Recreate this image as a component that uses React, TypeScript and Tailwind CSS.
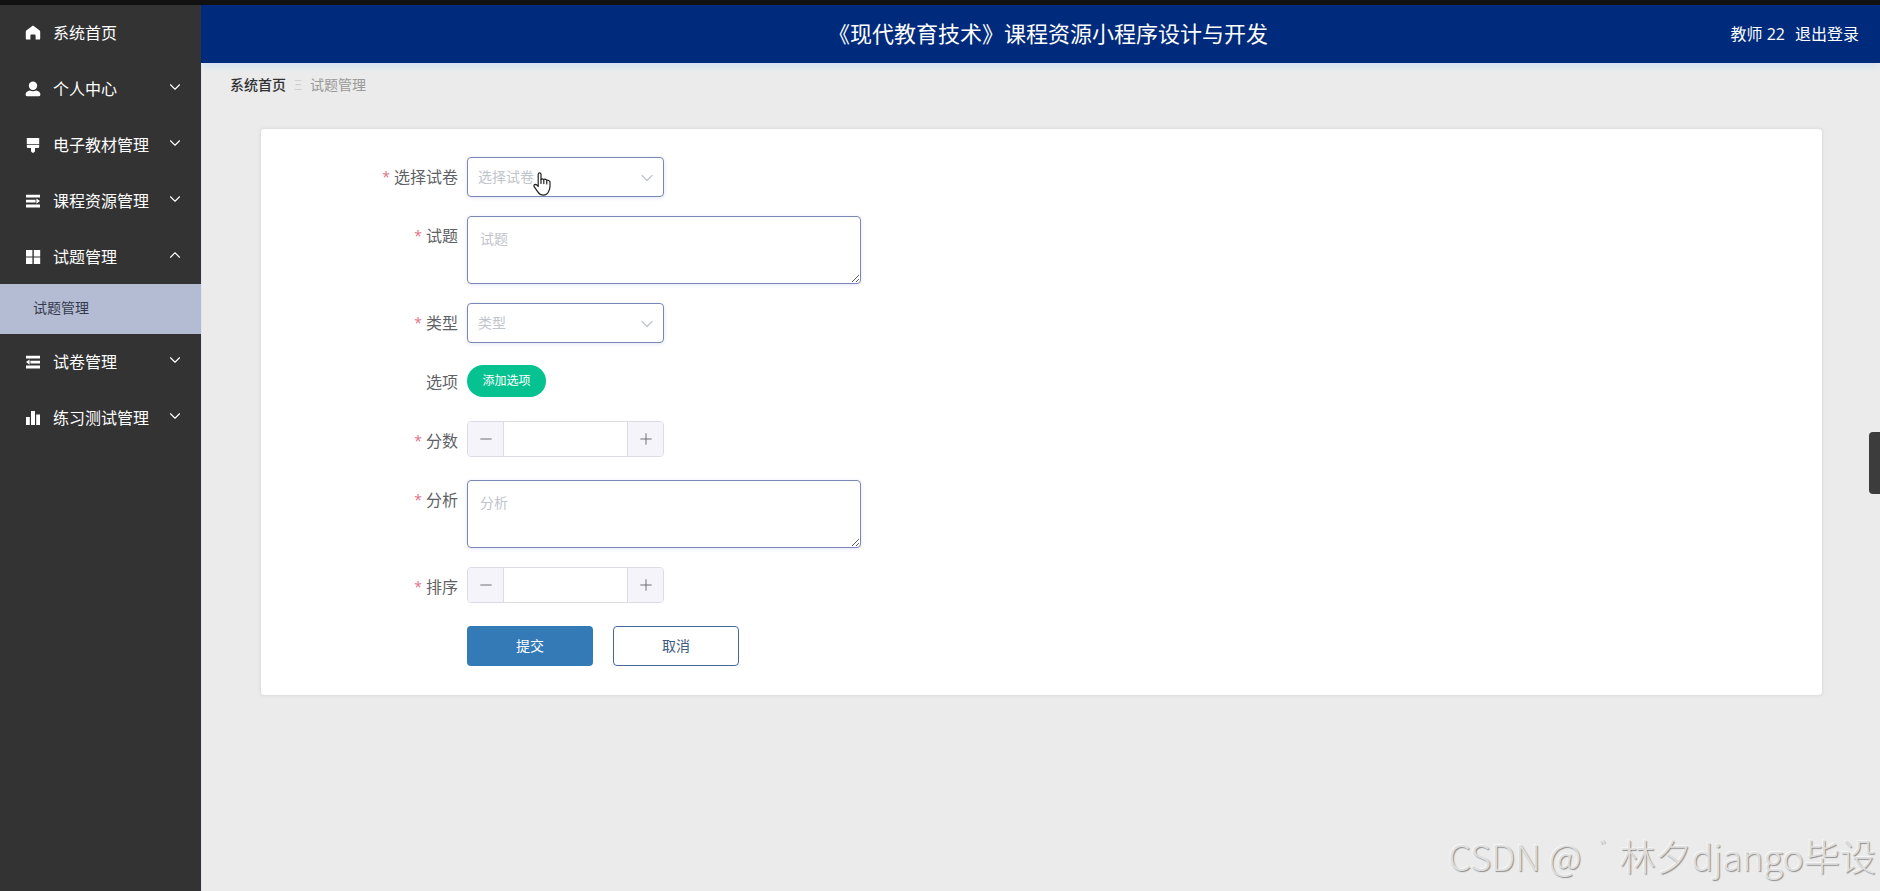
import { ReactNode, useState } from 'react';
import { FiChevronDown, FiChevronUp, FiMinus, FiPlus } from 'react-icons/fi';

interface MenuItem {
  label: string;
  icon: ReactNode;
  children?: string[];
}

const HomeIcon = (
  <svg viewBox="0 0 16 16" className="w-4 h-4 fill-current">
    <path d="M8 0.6 1.6 5.2Q0.8 5.8 0.8 6.8V13.4Q0.8 14.6 2 14.6H5.4V10.6Q5.4 9.6 6.4 9.6H9.6Q10.6 9.6 10.6 10.6V14.6H14Q15.2 14.6 15.2 13.4V6.8Q15.2 5.8 14.4 5.2Z" />
  </svg>
);

const UserIcon = (
  <svg viewBox="0 0 16 16" className="w-4 h-4 fill-current">
    <circle cx="8" cy="4.7" r="4.2" />
    <path d="M4.6 9.4Q8 11 11.4 9.4Q15.4 10.4 15.4 13.6Q15.4 15.2 14 15.2H2Q0.6 15.2 0.6 13.6Q0.6 10.4 4.6 9.4Z" />
  </svg>
);

const BrushIcon = (
  <svg viewBox="0 0 16 16" className="w-4 h-4 fill-current">
    <path d="M2.4 1H13.6Q14.2 1 14.2 1.6V7.2H1.8V1.6Q1.8 1 2.4 1Z" />
    <path d="M1.8 8H14.2V9.8Q14.2 11 13 11H10V14.4L8.6 15.8H7.4L6 14.4V11H3Q1.8 11 1.8 9.8Z" />
  </svg>
);

const UnfoldIcon = (
  <svg viewBox="0 0 16 16" className="w-4 h-4 fill-current">
    <path d="M1 1.8H15V4.6H1ZM1 6.8H10.6V9.4H1ZM1 11.6H15V14.4H1ZM11.4 5.4 15 8.1 11.4 10.8Z" />
  </svg>
);

const GridIcon = (
  <svg viewBox="0 0 16 16" className="w-4 h-4 fill-current">
    <path d="M1 1H7.4V7.4H1ZM8.8 1H15.2V7.4H8.8ZM1 8.6H7.4V15H1ZM8.8 8.6H15.2V15H8.8Z" />
  </svg>
);

const FoldIcon = (
  <svg viewBox="0 0 16 16" className="w-4 h-4 fill-current">
    <path d="M1 1.8H15V4.6H1ZM5.4 6.8H15V9.4H5.4ZM1 11.6H15V14.4H1ZM4.6 5.4 1 8.1 4.6 10.8Z" />
  </svg>
);

const ChartIcon = (
  <svg viewBox="0 0 16 16" className="w-4 h-4 fill-current">
    <path d="M1 7H4.8V15H1ZM6 1H10V15H6ZM11.2 4.6H15V15H11.2Z" />
  </svg>
);

const menu: MenuItem[] = [
  { label: '系统首页', icon: HomeIcon },
  { label: '个人中心', icon: UserIcon, children: [] },
  { label: '电子教材管理', icon: BrushIcon, children: [] },
  { label: '课程资源管理', icon: UnfoldIcon, children: [] },
  { label: '试题管理', icon: GridIcon, children: ['试题管理'] },
  { label: '试卷管理', icon: FoldIcon, children: [] },
  { label: '练习测试管理', icon: ChartIcon, children: [] },
];

function Sidebar() {
  const [open, setOpen] = useState('试题管理');

  return (
    <nav className="z-10 w-[201px] shrink-0 bg-[#333333] text-white">
      {menu.map((item) => (
        <div key={item.label}>
          <button
            type="button"
            className="flex h-14 w-full items-center pl-[25px] pr-[17px] text-base"
            onClick={() => item.children && setOpen(open === item.label ? '' : item.label)}
          >
            {item.icon}
            <span className="ml-3 flex-1 text-left">{item.label}</span>
            {item.children &&
              (open === item.label ? (
                <FiChevronUp className="mb-1 h-[18px] w-[18px]" strokeWidth={1.5} />
              ) : (
                <FiChevronDown className="mb-1 h-[18px] w-[18px]" strokeWidth={1.5} />
              ))}
          </button>
          {open === item.label &&
            item.children?.map((child) => (
              <a
                key={child}
                href="#"
                className="-mt-px flex h-[50px] items-center bg-[#b4bcd4] pb-0.5 pl-[33px] text-sm text-[#333a4c]"
              >
                {child}
              </a>
            ))}
        </div>
      ))}
    </nav>
  );
}

interface FieldProps {
  label: string;
  id: string;
  required?: boolean;
  children: ReactNode;
}

function Field({ label, id, required = false, children }: FieldProps) {
  return (
    <div className="mb-[19px] flex items-start">
      <label
        htmlFor={id}
        className="flex h-10 w-[169px] shrink-0 items-center justify-end pr-[9px] text-base text-[#606266]"
      >
        {required && <span className="mr-1 text-sm text-[#e0708a]">*</span>}
        {label}
      </label>
      {children}
    </div>
  );
}

function SelectBox({ id, placeholder }: { id: string; placeholder: string }) {
  return (
    <div className="relative h-10 w-[197px]">
      <select
        id={id}
        defaultValue=""
        className="h-full w-full cursor-pointer appearance-none rounded border border-[#7b86b6] bg-white px-2.5 text-sm text-[#c0c4cc] shadow-[0_1px_4px_#e4e7f6]"
      >
        <option value="" disabled>
          {placeholder}
        </option>
      </select>
      <FiChevronDown
        className="pointer-events-none absolute right-[7px] top-[11px] h-5 w-5 text-[#c0c4cc]"
        strokeWidth={1.5}
      />
    </div>
  );
}

function TextArea({ id, placeholder }: { id: string; placeholder: string }) {
  return (
    <textarea
      id={id}
      placeholder={placeholder}
      className="block h-[68px] w-[394px] resize rounded border border-[#7b86b6] bg-white px-3 py-3 text-sm leading-5 text-[#606266] shadow-[0_1px_4px_#e4e7f6] placeholder:text-[#c0c4cc]"
    />
  );
}

function NumberBox({ id }: { id: string }) {
  const [value, setValue] = useState('');
  const step = (by: number) => setValue(String((Number(value) || 0) + by));

  return (
    <div className="flex h-9 w-[197px] overflow-hidden rounded border border-[#dcdce6] bg-white">
      <button
        type="button"
        aria-label="减少"
        onClick={() => step(-1)}
        className="flex w-9 items-center justify-center border-r border-[#dcdce6] bg-[#f5f4fa] text-[#606266]"
      >
        <FiMinus className="h-[18px] w-[18px]" strokeWidth={1.2} />
      </button>
      <input
        id={id}
        type="text"
        value={value}
        onChange={(e) => setValue(e.target.value)}
        className="min-w-0 flex-1 text-center text-sm text-[#606266]"
      />
      <button
        type="button"
        aria-label="增加"
        onClick={() => step(1)}
        className="flex w-9 items-center justify-center border-l border-[#dcdce6] bg-[#f5f4fa] text-[#606266]"
      >
        <FiPlus className="h-[18px] w-[18px]" strokeWidth={1.2} />
      </button>
    </div>
  );
}

function HandPointer() {
  return (
    <svg
      viewBox="0 0 18 24"
      className="pointer-events-none absolute left-[66px] top-[15px] h-6 w-[18px]"
      fill="#ffffff"
      stroke="#222222"
      strokeWidth="1.2"
      strokeLinejoin="round"
      strokeLinecap="round"
    >
      <path d="M5.2 14.5V2.5Q5.2 0.9 6.6 0.9Q8 0.9 8 2.5V7.6Q9 6.2 10.6 7.6Q12 6.6 13.6 8.2Q15.4 7.8 17 9.6V14.2Q16.9 17 15.6 19.6Q14 23.2 10.2 23.2Q7 23.2 5 20.2L1 14.4Q0.6 12.6 2.2 12.4Q3.8 12.4 5.2 14.5Z" />
      <path d="M8 7.6V11.4M10.8 7.8V11.6M13.8 8.6V12" fill="none" />
    </svg>
  );
}

function QuestionForm() {
  return (
    <form
      className="rounded border border-[#e0e0e3] bg-white pb-2.5 pl-[37px] pt-7 shadow-[0_0_3px_#dddddf]"
      onSubmit={(e) => e.preventDefault()}
    >
      <Field label="选择试卷" id="paper" required>
        <div className="relative">
          <SelectBox id="paper" placeholder="选择试卷" />
          <HandPointer />
        </div>
      </Field>
      <Field label="试题" id="question" required>
        <TextArea id="question" placeholder="试题" />
      </Field>
      <Field label="类型" id="type" required>
        <SelectBox id="type" placeholder="类型" />
      </Field>
      <Field label="选项" id="options">
        <div className="flex h-[38px] items-center">
          <button id="options" type="button" className="h-8 w-[79px] rounded-full bg-[#06c291] text-xs text-white">
            添加选项
          </button>
        </div>
      </Field>
      <Field label="分数" id="score" required>
        <NumberBox id="score" />
      </Field>
      <Field label="分析" id="analysis" required>
        <TextArea id="analysis" placeholder="分析" />
      </Field>
      <Field label="排序" id="order" required>
        <NumberBox id="order" />
      </Field>
      <div className="mb-[19px] flex gap-5 pl-[169px]">
        <button type="submit" className="h-10 w-[126px] rounded bg-[#337ab7] text-sm text-white">
          提交
        </button>
        <button
          type="button"
          className="h-10 w-[126px] rounded border border-[#456a9a] bg-white text-sm text-[#3d5a80]"
        >
          取消
        </button>
      </div>
    </form>
  );
}

export default function App() {
  return (
    <div className="relative flex min-h-screen flex-col border-t-[5px] border-[#111111] bg-[#ebebeb] font-['Open_Sans','Noto_Sans_CJK_SC',sans-serif]">
      <div className="flex flex-1">
        <Sidebar />
        <div className="flex min-w-0 flex-1 flex-col">
          <header className="flex h-[58px] items-center bg-[#002b7c] pr-[21px] text-white shadow-[0_6px_6px_-2px_#d5e2f0]">
            <div className="w-[170px]" />
            <h1 className="flex-1 pb-0.5 text-center text-[22px] leading-8">《现代教育技术》课程资源小程序设计与开发</h1>
            <div className="flex w-[134px] shrink-0 justify-end gap-2.5 whitespace-nowrap text-base">
              <span>教师 22</span>
              <a href="#">退出登录</a>
            </div>
          </header>

          <main className="flex-1 border-l border-[#e2e2f2] px-7">
            <div className="flex items-center pt-3 text-sm leading-5">
              <a href="#" className="font-medium text-[#303133]">
                系统首页
              </a>
              <span className="flex w-6 justify-center text-[#cfcfd4]">Ξ</span>
              <span className="text-[#999999]">试题管理</span>
            </div>
            <div className="ml-[30px] mr-[29px] mt-[33px]">
              <QuestionForm />
            </div>
          </main>
        </div>
      </div>

      <div className="absolute right-0 top-[427px] h-[62px] w-[11px] rounded-l-sm bg-[#3c3c3c]" />
      <div className="pointer-events-none absolute bottom-4 right-1 flex font-['Noto_Sans_CJK_SC',sans-serif] text-4xl font-light text-[#dedede] [text-shadow:1px_1px_1px_#8f8f8f,-1px_-1px_0_#f6f6f6]">
        <span>CSDN @</span>
        <span className="ml-[18px] w-5 text-xl">゛</span>
        <span>林夕django毕设</span>
      </div>
    </div>
  );
}
